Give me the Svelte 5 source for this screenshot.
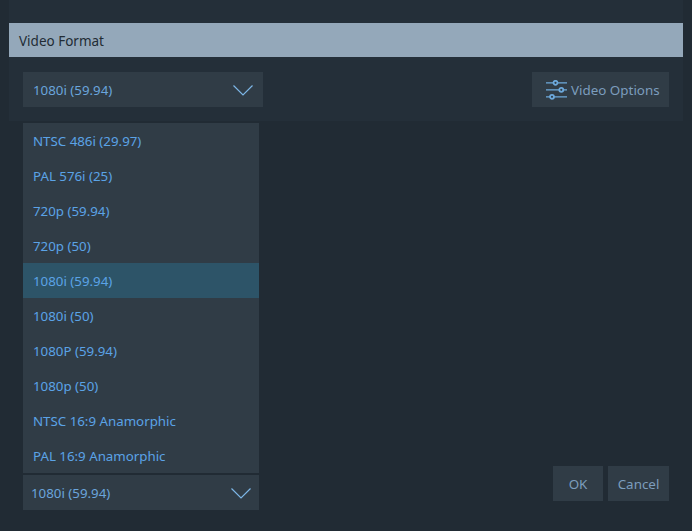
<script>
  const options = ['NTSC 486i (29.97)','PAL 576i (25)','720p (59.94)','720p (50)','1080i (59.94)','1080i (50)','1080P (59.94)','1080p (50)','NTSC 16:9 Anamorphic','PAL 16:9 Anamorphic'];
  const selected = '1080i (59.94)';
</script>

<div class="page">
  <section class="panel">
    <h2 class="title">Video Format</h2>
    <div class="controls">
      <div class="select top">
        <span>{selected}</span>
        <svg class="chev" width="20" height="11" viewBox="0 0 20 11"><path d="M0.5 0.5 L10 10 L19.5 0.5" /></svg>
      </div>
      <button class="options">
        <svg width="22" height="20" viewBox="0 0 22 20">
          <g class="lines"><path d="M0 2.8H21M0 9.8H21M0 16.8H21"/></g>
          <g class="knobs"><circle cx="9.5" cy="2.8" r="2"/><circle cx="15.3" cy="9.8" r="2"/><circle cx="6" cy="16.8" r="2"/></g>
        </svg>
        <span>Video Options</span>
      </button>
    </div>
  </section>

  <div class="body">
    <div class="left">
      <ul class="list">
        {#each options as o}
          <li class:sel={o === selected}>{o}</li>
        {/each}
      </ul>
      <div class="select bottom">
        <span>{selected}</span>
        <svg class="chev" width="20" height="11" viewBox="0 0 20 11"><path d="M0.5 0.5 L10 10 L19.5 0.5" /></svg>
      </div>
    </div>
    <div class="actions">
      <button class="btn ok">OK</button>
      <button class="btn cancel">Cancel</button>
    </div>
  </div>
</div>

<style>
  :global(body) { margin: 0; background: #212b34; }
  .page { width: 692px; height: 531px; overflow: hidden; font-family: "Noto Sans", "Open Sans", sans-serif; font-size: 13.3px; color: #5ba3e6; }
  .panel { margin: 0 9px; height: 121px; box-sizing: border-box; padding-top: 23px; background: #242f39; }
  .title { margin: 0; height: 34px; line-height: 36px; padding-left: 10px; background: #94a8ba; color: #222c35; font-size: 13.5px; font-weight: 400; }
  .controls { display: flex; justify-content: space-between; padding: 15px 14px 0; }
  .select { display: flex; align-items: center; justify-content: space-between; height: 35px; box-sizing: border-box; background: #303c46; color: #6aa5dc; }
  .top { width: 240px; padding: 0 10px; }
  .chev { fill: none; stroke: #7db6e6; stroke-width: 1.2; margin-top: 2px; }
  .options { display: flex; align-items: center; gap: 3px; width: 137px; height: 35px; padding: 0 0 0 14px; border: 0; background: #303c46; color: #7c9dbd; font: inherit; font-size: 13.4px; }
  .lines path { stroke: #6da9dc; stroke-width: 1.2; fill: none; }
  .knobs circle { fill: #303c46; stroke: #6da9dc; stroke-width: 1.8; }
  .body { display: flex; justify-content: space-between; padding: 2px 23px 0; }
  .left { width: 236px; }
  .list { margin: 0; padding: 0; list-style: none; background: #303c46; }
  .list li { height: 35px; line-height: 36px; padding-left: 10px; color: #5ba3e6; }
  .list li.sel { background: #2d5468; }
  .bottom { margin-top: 2px; padding: 0 8px; background: #303c46; }
  .actions { display: flex; gap: 5px; align-self: flex-end; margin-bottom: 9px; }
  .btn { height: 35px; border: 0; padding: 0; background: #303c46; color: #7c9dbd; font: inherit; font-size: 13.4px; }
  .ok { width: 50px; }
  .cancel { width: 61px; }
</style>
